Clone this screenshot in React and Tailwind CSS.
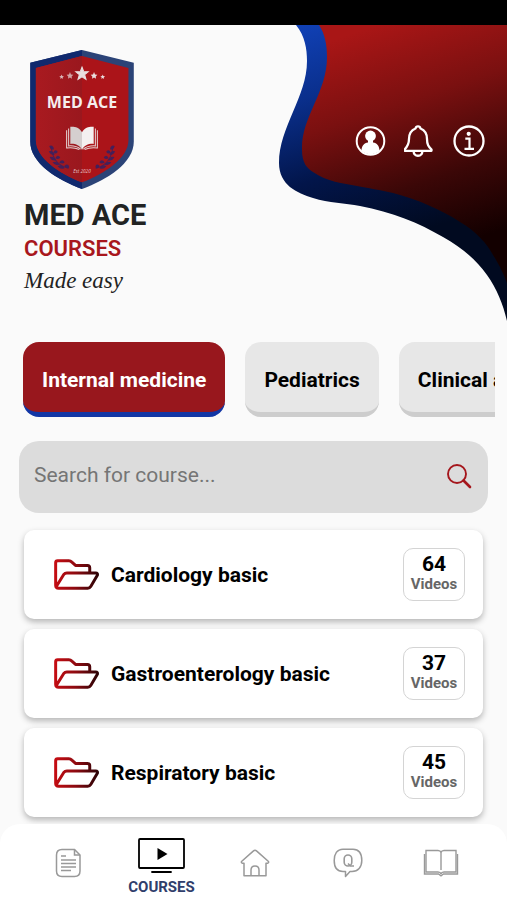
import { useState } from 'react';

const categories = ['Internal medicine', 'Pediatrics', 'Clinical anatomy'];

const courses = [
  { title: 'Cardiology basic', videos: 64 },
  { title: 'Gastroenterology basic', videos: 37 },
  { title: 'Respiratory basic', videos: 45 },
];

function Shield() {
  return (
    <svg className="block h-[139px] w-[104px]" viewBox="91 91 310 416" role="img" aria-label="Med Ace">
      <defs>
        <clipPath id="leftHalf">
          <rect x="91" y="91" width="155" height="416" />
        </clipPath>
        <linearGradient id="leftRed" x1="0" x2="1" y1="0" y2="0">
          <stop offset="0" stopColor="#a91a20" />
          <stop offset="1" stopColor="#8a151c" />
        </linearGradient>
      </defs>
      <path d="M246 91 401 129V365C401 430 320 480 246 507 172 480 91 430 91 365V129Z" fill="#2b4377" />
      <path
        d="M246 91 401 129V365C401 430 320 480 246 507 172 480 91 430 91 365V129Z"
        fill="#10296e"
        clipPath="url(#leftHalf)"
      />
      <path d="M246 109 385 145V360C385 414 315 460 246 487 177 460 108 414 108 360V145Z" fill="#ab1419" />
      <path
        d="M246 109 385 145V360C385 414 315 460 246 487 177 460 108 414 108 360V145Z"
        fill="url(#leftRed)"
        clipPath="url(#leftHalf)"
      />
      <g fill="#e9dede">
        <path d="M246 142l5 13 14 1-11 9 4 14-12-8-12 8 4-14-11-9 14-1z" stroke="#e9dede" strokeWidth="3" />
        <path d="M210 157l3 7 7 1-5 5 1 7-6-4-6 4 1-7-5-5 7-1z" opacity=".7" />
        <path d="M282 157l3 7 7 1-5 5 1 7-6-4-6 4 1-7-5-5 7-1z" />
        <path d="M185 164l2 5 5 1-4 3 1 5-4-3-4 3 1-5-4-3 5-1z" opacity=".8" />
        <path d="M308 164l2 5 5 1-4 3 1 5-4-3-4 3 1-5-4-3 5-1z" />
      </g>
      <text
        x="246"
        y="266"
        textAnchor="middle"
        fontSize="48"
        fontWeight="700"
        fill="#f5eeee"
        fontFamily="'Open Sans', 'Noto Sans', sans-serif"
      >
        MED ACE
      </text>
      <path d="M246 337C237 322 223 320 211 321V372C226 371 239 376 246 390Z" fill="#d5cfcf" />
      <path d="M246 337C255 322 269 320 281 321V372C266 371 253 376 246 390Z" fill="#f4f0f0" />
      <path
        d="M206 326V378C222 377 233 380 242 388M200 331V384C215 382 228 384 238 389M286 326V378C270 377 259 380 250 388M292 331V384C277 382 264 384 254 389"
        fill="none"
        stroke="#e6d4d4"
        strokeWidth="3"
      />
      <g fill="#43205a">
        <path d="M148 378Q160 374 162 388 152 392 148 378ZM147 394Q159 390 164 405 152 407 147 394ZM149 411Q162 407 168 421 155 424 149 411ZM158 427Q171 421 179 434 166 440 158 427ZM173 439Q186 431 194 444 183 451 173 439ZM160 399Q163 386 173 394 173 404 160 399ZM166 415Q172 401 181 412 178 420 166 415ZM178 428Q187 415 194 427 189 434 178 428ZM193 438Q204 428 208 441 202 450 193 438Z" />
        <path d="M344 378Q332 374 330 388 340 392 344 378ZM345 394Q333 390 328 405 340 407 345 394ZM343 411Q330 407 324 421 337 424 343 411ZM334 427Q321 421 313 434 326 440 334 427ZM319 439Q306 431 298 444 309 451 319 439ZM332 399Q329 386 319 394 319 404 332 399ZM326 415Q320 401 311 412 314 420 326 415ZM314 428Q305 415 298 427 303 434 314 428ZM299 438Q288 428 286 441 292 450 299 438Z" />
        <path
          d="M154 382C157 415 176 438 206 445M338 382C335 415 316 438 287 445"
          fill="none"
          stroke="#43205a"
          strokeWidth="3"
        />
      </g>
      <text
        x="246"
        y="460"
        textAnchor="middle"
        fontSize="14"
        fontStyle="italic"
        fill="#e8cccc"
        fontFamily="'Open Sans', 'Noto Sans', sans-serif"
      >
        Est 2020
      </text>
    </svg>
  );
}

function Wave() {
  return (
    <svg className="absolute top-0 right-0 h-[297px] w-[230px]" viewBox="0 0 230 297" aria-hidden="true">
      <defs>
        <linearGradient id="waveBlue" gradientUnits="userSpaceOnUse" x1="30" y1="0" x2="100" y2="220">
          <stop offset="0" stopColor="#1040b4" />
          <stop offset=".3" stopColor="#0a2f8c" />
          <stop offset=".65" stopColor="#02154a" />
          <stop offset="1" stopColor="#010a20" />
        </linearGradient>
        <linearGradient id="waveRed" gradientUnits="userSpaceOnUse" x1="100" y1="0" x2="174" y2="222">
          <stop offset="0" stopColor="#a91616" />
          <stop offset=".35" stopColor="#7a1010" />
          <stop offset=".7" stopColor="#3b0707" />
          <stop offset="1" stopColor="#130000" />
        </linearGradient>
      </defs>
      <path
        d="M19 0C28 11 30 24 30 36 30 72 2 102 2 138 2 160 20 168 36 173 52 178 68 178 83 181 115 187 142 198 166 212 186 223 200 236 210 250 220 264 226 279 230 296V0Z"
        fill="url(#waveBlue)"
      />
      <path
        d="M42 0C48 9 50 20 50 32 50 68 24 92 25 125 25 138 30 143 36 147 50 157 66 158 80 161 90 163 104 165 116 168 142 175 165 185 183 197 200 207 210 219 216 230 223 241 227 250 230 258V0Z"
        fill="url(#waveRed)"
      />
    </svg>
  );
}

function HeaderActions() {
  return (
    <div className="relative mt-[75px] flex gap-[17px] text-white">
      <button type="button" aria-label="Profile" className="size-8">
        <svg viewBox="0 0 32 32" fill="none">
          <circle cx="15.500" cy="16" r="13.800" stroke="currentColor" strokeWidth="2" />
          <circle cx="15.500" cy="11" r="5.400" fill="currentColor" />
          <path
            d="M13 14H18V17.500C22 18 24.300 21 24.600 25.500 19.500 30.500 11.500 30.500 6.400 25.500 6.700 21 9 18 13 17.500Z"
            fill="currentColor"
          />
        </svg>
      </button>
      <button type="button" aria-label="Notifications" className="size-8">
        <svg viewBox="0 0 32 32" fill="none" stroke="currentColor" strokeWidth="2.300" strokeLinejoin="round">
          <path d="M11.500 3.500C12 .7 16 .7 16.500 3.500 21.500 5.500 23 9.500 23 14 23 19.500 24.500 21.500 27.500 24.500V25.800H.7V24.500C3.500 21.500 5 19.500 5 14 5 9.500 6.500 5.500 11.500 3.500Z" />
          <path d="M9.500 26C10 32.300 18 32.300 18.500 26" />
        </svg>
      </button>
      <button type="button" aria-label="Information" className="size-8">
        <svg viewBox="0 0 32 32" fill="none" stroke="currentColor" strokeWidth="2.300">
          <circle cx="16" cy="16" r="14.500" />
          <circle cx="15.700" cy="8.800" r="2.100" fill="currentColor" stroke="none" />
          <path d="M12.300 13.700H16.500V23.500M11.500 23.800H21" strokeWidth="2.200" />
        </svg>
      </button>
    </div>
  );
}

function FolderIcon() {
  return (
    <svg className="h-[31px] w-[45px] shrink-0" viewBox="162 119 136 93" fill="none" aria-hidden="true">
      <defs>
        <linearGradient id="folder" gradientUnits="userSpaceOnUse" x1="165" y1="165" x2="296" y2="175">
          <stop offset="0" stopColor="#c40c12" />
          <stop offset=".5" stopColor="#8a0a10" />
          <stop offset="1" stopColor="#2a0306" />
        </linearGradient>
      </defs>
      <path
        d="M270 160V145Q270 138 263 138H227L216 128Q212 124 207 124H173Q167 124 167 130V198Q167 207 176 207H264Q270 207 273 202L293 168Q295 161 288 161H201Q195 161 191 166L169 202"
        stroke="url(#folder)"
        strokeWidth="9"
        strokeLinejoin="round"
        strokeLinecap="round"
      />
    </svg>
  );
}

function CourseCard({ title, videos }) {
  return (
    <li>
      <a
        href="#course"
        className="flex items-center rounded-[10px] bg-white py-[18px] pr-[18px] pl-[30px] shadow-[0_3px_6px_rgba(0,0,0,0.28)]"
      >
        <FolderIcon />
        <span className="ml-3 flex-1 text-[21px] leading-6 font-bold text-black">{title}</span>
        <span className="flex h-[53px] w-[62px] flex-col items-center rounded-[10px] border border-[#d4d4d4] pt-[5px]">
          <span className="text-[21px] leading-5 font-bold text-black">{videos}</span>
          <span className="text-[15px] leading-5 font-bold text-[#666666]">Videos</span>
        </span>
      </a>
    </li>
  );
}

function NotesIcon() {
  return (
    <svg className="h-[30px] w-[27px]" viewBox="0 0 27 30" fill="none" stroke="currentColor" strokeWidth="1.500">
      <path d="M7 1.500H19.500L25 7V23Q25 28.500 19.500 28.500H7Q1.500 28.500 1.500 23V7Q1.500 1.500 7 1.500Z" />
      <path d="M19.500 1.500V7H25" />
      <path d="M6 8H11M6 12H21M6 15.500H21M6 19H21M6 22.500H16" />
    </svg>
  );
}

function MonitorIcon() {
  return (
    <svg className="h-[35px] w-[47px]" viewBox="0 0 47 35" fill="none" stroke="currentColor">
      <rect x="1" y="1" width="45" height="29" rx="1" strokeWidth="1.800" />
      <path d="M14 34H33" strokeWidth="1.800" strokeLinecap="round" />
      <path d="M19.500 10V22L29.500 16Z" fill="currentColor" stroke="none" />
    </svg>
  );
}

function HomeIcon() {
  return (
    <svg className="h-[28px] w-[30px]" viewBox="0 0 30 28" fill="none" stroke="currentColor" strokeWidth="1.500">
      <path
        d="M15 1.200Q15.800 1.200 16.500 1.900L28.500 12.500Q29 13.800 27.500 14.300H26V26.800H4V14.300H2.500Q1 13.800 1.500 12.500L13.500 1.900Q14.200 1.200 15 1.200Z"
        strokeLinejoin="round"
      />
      <path d="M11 26.500V21C11 15.500 19 15.500 19 21V26.500" />
    </svg>
  );
}

function QuestionIcon() {
  return (
    <svg className="h-[30px] w-[30px]" viewBox="0 0 30 30" fill="none" stroke="currentColor" strokeWidth="1.500">
      <path
        d="M10 1.200H20C26 1.200 28.800 6 28.800 12.500 28.800 19 25 23.500 19 23.500H17L12.500 28.500V23.500H10C4 23.500 1.200 19 1.200 12.500 1.200 6 4 1.200 10 1.200Z"
        strokeLinejoin="round"
      />
      <rect x="11.200" y="7" width="7.600" height="11" rx="3.800" strokeWidth="1.600" />
      <path d="M15 15.500L17.500 18H21" strokeWidth="1.600" />
    </svg>
  );
}

function BookIcon() {
  return (
    <svg className="h-[28px] w-[36px]" viewBox="0 0 36 28" fill="none" stroke="currentColor" strokeWidth="1.400">
      <path d="M18 21V3.500Q17.500 1.500 15 1.500H3V23H15Q17.500 23 18 25 18.500 23 21 23H33V1.500H21Q18.500 1.500 18 3.500" />
      <path d="M1.500 5V25H15.500L18 26.800 20.500 25H34.500V5" strokeWidth="1.400" />
    </svg>
  );
}

const navItems = [
  { name: 'Notes', Icon: NotesIcon },
  { name: 'Courses', Icon: MonitorIcon },
  { name: 'Home', Icon: HomeIcon },
  { name: 'Questions', Icon: QuestionIcon },
  { name: 'Library', Icon: BookIcon },
];

export default function App() {
  const [category, setCategory] = useState(categories[0]);
  const [query, setQuery] = useState('');

  const visible = courses.filter((c) => c.title.toLowerCase().includes(query.toLowerCase()));

  return (
    <div className="flex h-screen flex-col overflow-hidden bg-[#fafafa] font-[Roboto,sans-serif]">
      <div className="h-[25px] shrink-0 bg-black" />

      <header className="relative flex shrink-0 items-start justify-between pt-[25px] pr-[22px] pl-6">
        <Wave />
        <div>
          <div className="pl-1.5">
            <Shield />
          </div>
          <h1 className="mt-2 text-[29px] leading-9 font-bold text-[#212323]">MED ACE</h1>
          <p className="text-[22px] leading-8 font-semibold text-[#a8171d]">COURSES</p>
          <p className="font-['Liberation_Serif',serif] text-[23px] leading-8 text-[#222222] italic">Made easy</p>
        </div>
        <HeaderActions />
      </header>

      <div className="mt-[45px] mr-3 ml-[23px] flex shrink-0 gap-5 overflow-hidden">
        {categories.map((name) => (
          <button
            key={name}
            type="button"
            onClick={() => setCategory(name)}
            className={`h-[75px] shrink-0 rounded-2xl border-b-[5px] px-[19px] pt-2 text-[21px] font-bold whitespace-nowrap ${
              name === category
                ? 'border-[#1236a5] bg-[#98171d] text-white'
                : 'border-[#cdcdcd] bg-[#e7e7e7] text-black'
            }`}
          >
            {name}
          </button>
        ))}
      </div>

      <label className="mx-[19px] mt-6 flex h-[72px] shrink-0 items-center rounded-[20px] bg-[#dcdcdc] pr-4 pb-0.5 pl-[15px]">
        <input
          type="text"
          aria-label="Search for course"
          value={query}
          onChange={(e) => setQuery(e.target.value)}
          placeholder="Search for course..."
          className="min-w-0 flex-1 bg-transparent text-[21px] text-black outline-none placeholder:text-[#757575]"
        />
        <svg className="size-[26px]" viewBox="0 0 26 26" fill="none" stroke="#a5161c" aria-hidden="true">
          <circle cx="11" cy="11" r="9" strokeWidth="1.900" />
          <path d="M17.500 17.500L24 24" strokeWidth="2.600" strokeLinecap="round" />
        </svg>
      </label>

      <main className="min-h-0 flex-1 overflow-hidden px-6 pt-[17px]">
        <ul className="space-y-[10px]">
          {visible.map((course) => (
            <CourseCard key={course.title} {...course} />
          ))}
        </ul>
      </main>

      <nav className="grid h-[76px] shrink-0 grid-cols-5 rounded-t-[20px] bg-white pr-5 pl-[22px]">
        {navItems.map(({ name, Icon }) => (
          <a
            key={name}
            href={`#${name.toLowerCase()}`}
            aria-label={name}
            className={`flex flex-col items-center justify-center ${
              name === 'Courses' ? 'pt-[10px] text-black' : 'pt-0.5 text-[#999999]'
            }`}
          >
            <Icon />
            {name === 'Courses' && (
              <span className="mt-1 text-[15px] leading-5 font-bold text-[#303e6b] uppercase">{name}</span>
            )}
          </a>
        ))}
      </nav>
    </div>
  );
}
